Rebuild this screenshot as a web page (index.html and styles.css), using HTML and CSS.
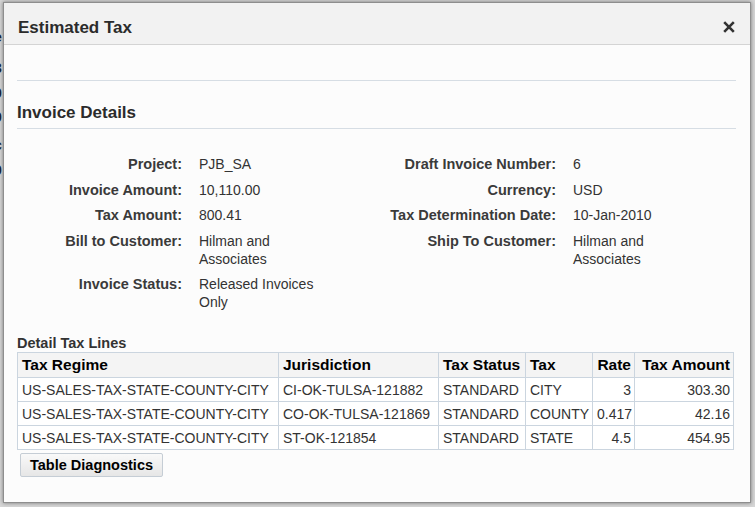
FILE: index.html
```html
<!DOCTYPE html>
<html lang="en">
<head>
  <meta charset="UTF-8">
  <meta name="viewport" content="width=device-width, initial-scale=1.0">
  <title>Estimated Tax</title>
  <link rel="stylesheet" href="styles.css">
</head>
<body>
  <!-- Page behind the popup, only its edge shows -->
  <div class="page">
    <p class="l1">e</p>
    <p class="l2">3</p>
    <p class="l3">0</p>
    <p class="l4">0</p>
    <p class="l5">c</p>
    <p class="l6">0</p>
  </div>

  <!-- Popup dialog -->
  <div class="dialog">
    <div class="dialog-header">
      <h1>Estimated Tax</h1>
      <button class="close" aria-label="Close">
        <svg width="12" height="12" viewBox="0 0 12 12">
          <path d="M1.2 1.2 L10.8 10.8 M10.8 1.2 L1.2 10.8" stroke="#333" stroke-width="2.6" stroke-linecap="butt" fill="none"/>
        </svg>
      </button>
    </div>

    <div class="dialog-body">
      <div class="toolbar"></div>

      <h2 class="section-title">Invoice Details</h2>

      <div class="details">
        <span class="label">Project:</span>
        <span class="value">PJB_SA</span>
        <span class="label">Draft Invoice Number:</span>
        <span class="value">6</span>

        <span class="label">Invoice Amount:</span>
        <span class="value">10,110.00</span>
        <span class="label">Currency:</span>
        <span class="value">USD</span>

        <span class="label">Tax Amount:</span>
        <span class="value">800.41</span>
        <span class="label">Tax Determination Date:</span>
        <span class="value">10-Jan-2010</span>

        <span class="label">Bill to Customer:</span>
        <span class="value">Hilman and Associates</span>
        <span class="label">Ship To Customer:</span>
        <span class="value">Hilman and Associates</span>

        <span class="label">Invoice Status:</span>
        <span class="value">Released Invoices Only</span>
        <span></span>
        <span></span>
      </div>

      <h3 class="table-title">Detail Tax Lines</h3>

      <table class="tax-lines">
        <colgroup>
          <col style="width: 261px">
          <col style="width: 160px">
          <col style="width: 87px">
          <col style="width: 67px">
          <col style="width: 42px">
          <col style="width: 99px">
        </colgroup>
        <thead>
          <tr>
            <th>Tax Regime</th>
            <th>Jurisdiction</th>
            <th>Tax Status</th>
            <th>Tax</th>
            <th class="num">Rate</th>
            <th class="num">Tax Amount</th>
          </tr>
        </thead>
        <tbody>
          <tr>
            <td>US-SALES-TAX-STATE-COUNTY-CITY</td>
            <td>CI-OK-TULSA-121882</td>
            <td>STANDARD</td>
            <td>CITY</td>
            <td class="num">3</td>
            <td class="num">303.30</td>
          </tr>
          <tr>
            <td>US-SALES-TAX-STATE-COUNTY-CITY</td>
            <td>CO-OK-TULSA-121869</td>
            <td>STANDARD</td>
            <td>COUNTY</td>
            <td class="num">0.417</td>
            <td class="num">42.16</td>
          </tr>
          <tr>
            <td>US-SALES-TAX-STATE-COUNTY-CITY</td>
            <td>ST-OK-121854</td>
            <td>STANDARD</td>
            <td>STATE</td>
            <td class="num">4.5</td>
            <td class="num">454.95</td>
          </tr>
        </tbody>
      </table>

      <button class="btn">Table Diagnostics</button>
    </div>
  </div>
</body>
</html>
```

FILE: styles.css
```css
/* General styles */
body {
  font-family: "Liberation Sans", Arial, sans-serif;
  margin: 0;
  padding: 0;
  background-color: #d6d6d6;
  overflow: hidden;
  height: 507px;
}

/* Page behind the popup */
.page {
  margin-left: -6px;
  padding-top: 27px;
}

.page p {
  margin: 0;
  font-size: 14px;
  font-weight: bold;
  line-height: 20px;
  color: #1c2533;
}

.page .l2 { margin-top: 11px; }
.page .l3 { margin-top: 5px; }
.page .l4 { margin-top: 4px; }
.page .l5 { margin-top: 8px; }
.page .l6 { margin-top: 5px; }

/* Dialog */
.dialog {
  position: absolute;
  left: 3px;
  top: 2px;
  width: 748px;
  height: 501px;
  box-sizing: border-box;
  border: 1px solid #8e8e8e;
  background-color: #fcfcfc;
  box-shadow: 0 0 4px rgba(0, 0, 0, 0.45);
  color: #333;
}

.dialog-header {
  height: 42px;
  box-sizing: border-box;
  padding: 8px 15px 0 14px;
  display: flex;
  justify-content: space-between;
  align-items: flex-start;
  background-color: #f2f2f2;
  border-bottom: 1px solid #d4d4d4;
}

.dialog-header h1 {
  margin: 0;
  font-size: 17px;
  line-height: 34px;
  color: #2b2b2b;
}

.close {
  background: none;
  border: none;
  padding: 0;
  margin-top: 10px;
  width: 12px;
  height: 12px;
  display: flex;
  cursor: pointer;
}

.dialog-body {
  padding: 0 14px 0 13px;
}

.toolbar {
  height: 35px;
  border-bottom: 1px solid #d6dde4;
}

.section-title {
  margin: 0;
  padding: 22px 0 5px;
  font-size: 17px;
  line-height: 20px;
  color: #2b2b2b;
  border-bottom: 1px solid #d6dde4;
}

/* Invoice details form */
.details {
  margin-top: 26px;
  display: grid;
  grid-template-columns: 165px 147px 227px 147px;
  row-gap: 7.5px;
  font-size: 14px;
  line-height: 18px;
}

.details .label {
  text-align: right;
  font-weight: bold;
  font-size: 14.5px;
  color: #3a3a3a;
  white-space: nowrap;
}

.details .value {
  padding-left: 17px;
  color: #333;
}

/* Detail tax lines table */
.table-title {
  margin: 23px 0 0;
  font-size: 14.5px;
  line-height: 18px;
  color: #333;
}

.tax-lines {
  border-collapse: collapse;
  table-layout: fixed;
  width: 716px;
  background-color: #fff;
  font-size: 14px;
}

.tax-lines th,
.tax-lines td {
  border: 1px solid #cbd5df;
  padding: 0 3px 0 4px;
  text-align: left;
  white-space: nowrap;
  overflow: hidden;
}

.tax-lines th {
  height: 24px;
  font-size: 15.5px;
  color: #000;
  background-color: #f4f4f4;
}

.tax-lines td {
  height: 23px;
  color: #333;
}

.tax-lines .num {
  text-align: right;
}

.btn {
  margin: 3px 0 0 3px;
  padding: 0 9px;
  height: 24px;
  font-family: inherit;
  font-size: 14.5px;
  font-weight: bold;
  color: #000;
  background: linear-gradient(#f9f9f9, #e6e6e6);
  border: 1px solid #c5cdd5;
  border-radius: 2px;
  cursor: pointer;
}
```
